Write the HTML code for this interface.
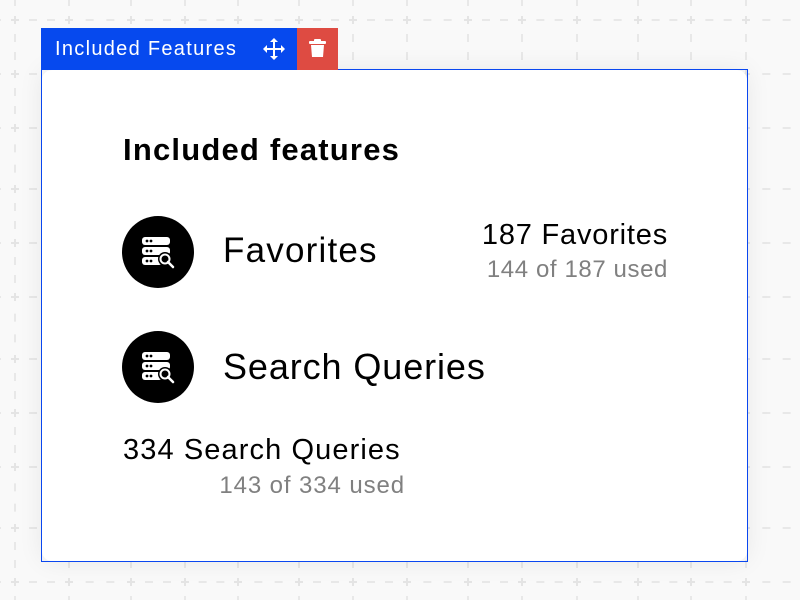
<!DOCTYPE html>
<html><head><meta charset="utf-8"><style>
html,body{margin:0;padding:0;width:800px;height:600px;overflow:hidden;background:#f9f9f9;font-family:"Liberation Sans",sans-serif;position:relative;}
#bg{position:absolute;left:0;top:0;overflow:hidden}
.card{position:absolute;left:42px;top:70px;width:705px;height:491px;background:#fff;border-radius:10px;box-shadow:0 0 25px rgba(0,0,0,0.08);}
.outl{position:absolute;left:41px;top:69px;width:705px;height:491px;border:1px solid #0a47f0;}
.bar{position:absolute;left:41px;top:28px;width:256px;height:42px;background:#0649ee;color:#fff;font-size:20px;letter-spacing:1.3px;}
.bar span{position:absolute;left:14px;top:10px;}
.del{position:absolute;left:297px;top:28px;width:41px;height:42px;background:#de4b42;}
.t{position:absolute;white-space:nowrap;color:#000;}
.g{color:#808080;}
.ic{position:absolute;width:72px;height:72px;border-radius:50%;background:#000;}
</style></head><body>
<svg id="bg" width="800" height="600"></svg>
<div class="card"></div>
<div class="outl"></div>
<div class="bar"><span>Included Features</span>
<svg style="position:absolute;left:222px;top:10px" width="22" height="22" viewBox="0 0 22 22" fill="#fff"><path d="M10 3h2v16h-2zM3 10h16v2H3z"/><path d="M11 0l4 4H7zM11 22l-4-4h8zM0 11l4-4v8zM22 11l-4 4V7z"/></svg></div>
<div class="del"><svg style="position:absolute;left:12px;top:11px" width="17" height="19" viewBox="0 0 17 19" fill="#fff"><rect x="0" y="2" width="17" height="3" rx="1"/><rect x="5" y="0" width="7" height="3" rx="1"/><path d="M2 6h13l-1 12H3z"/></svg></div>

<div class="t" style="left:123px;top:132px;font-size:31px;font-weight:bold;letter-spacing:1.2px;">Included features</div>

<div class="ic" style="left:122px;top:216px"></div>
<svg style="position:absolute;left:140px;top:234px" width="36" height="36" viewBox="0 0 36 36" fill="#fff"><rect x="2" y="3" width="28" height="8" rx="3"/><rect x="2" y="13" width="28" height="8" rx="3"/><rect x="2" y="23" width="20" height="8" rx="3"/><g fill="#000"><circle cx="7" cy="7" r="1.4"/><circle cx="11" cy="7" r="1.4"/><circle cx="7" cy="17" r="1.4"/><circle cx="11" cy="17" r="1.4"/><circle cx="7" cy="27" r="1.4"/><circle cx="11" cy="27" r="1.4"/></g><circle cx="25" cy="25" r="7" fill="#000"/><circle cx="25" cy="25" r="4.5" fill="none" stroke="#fff" stroke-width="2"/><path d="M28 28l5 5" stroke="#fff" stroke-width="2.5" stroke-linecap="round"/></svg>
<div class="t" style="left:223px;top:231px;font-size:35px;letter-spacing:1.2px;">Favorites</div>
<div class="t" style="right:132px;top:219px;font-size:29px;letter-spacing:0.8px;">187 Favorites</div>
<div class="t g" style="right:132px;top:256px;font-size:24px;letter-spacing:0.6px;">144 of 187 used</div>

<div class="ic" style="left:122px;top:331px"></div>
<svg style="position:absolute;left:140px;top:349px" width="36" height="36" viewBox="0 0 36 36" fill="#fff"><rect x="2" y="3" width="28" height="8" rx="3"/><rect x="2" y="13" width="28" height="8" rx="3"/><rect x="2" y="23" width="20" height="8" rx="3"/><g fill="#000"><circle cx="7" cy="7" r="1.4"/><circle cx="11" cy="7" r="1.4"/><circle cx="7" cy="17" r="1.4"/><circle cx="11" cy="17" r="1.4"/><circle cx="7" cy="27" r="1.4"/><circle cx="11" cy="27" r="1.4"/></g><circle cx="25" cy="25" r="7" fill="#000"/><circle cx="25" cy="25" r="4.5" fill="none" stroke="#fff" stroke-width="2"/><path d="M28 28l5 5" stroke="#fff" stroke-width="2.5" stroke-linecap="round"/></svg>
<div class="t" style="left:223px;top:346px;font-size:36px;letter-spacing:0.9px;">Search Queries</div>

<div class="t" style="left:123px;top:434px;font-size:29px;letter-spacing:1.1px;">334 Search Queries</div>
<div class="t g" style="right:395px;top:472px;font-size:24px;letter-spacing:0.9px;">143 of 334 used</div>

<script>
var xs=[-39,15,69,131,185,238,299,353,407,468,522,577,638,691,746,807];
var ys=[-34,20,74,128,189,243,297,359,413,467,528,582,636];
var s='';
function seg(a,b,f){var l=b-a;for(var k=1;k<=2;k++){var c=a+l*k/3;s+=f(c);}}
ys.forEach(function(y){for(var i=0;i<xs.length-1;i++)seg(xs[i],xs[i+1],function(c){return '<rect x="'+(c-4)+'" y="'+(y-1)+'" width="8" height="2" fill="#e8e8e8"/>';});});
xs.forEach(function(x){for(var i=0;i<ys.length-1;i++)seg(ys[i],ys[i+1],function(c){return '<rect x="'+(x-1)+'" y="'+(c-4)+'" width="2" height="8" fill="#e8e8e8"/>';});});
xs.forEach(function(x){ys.forEach(function(y){s+='<rect x="'+(x-4)+'" y="'+(y-1)+'" width="8" height="2" fill="#e4e4e4"/><rect x="'+(x-1)+'" y="'+(y-4)+'" width="2" height="8" fill="#e4e4e4"/>';});});
document.getElementById('bg').innerHTML=s;
</script>
</body></html>
